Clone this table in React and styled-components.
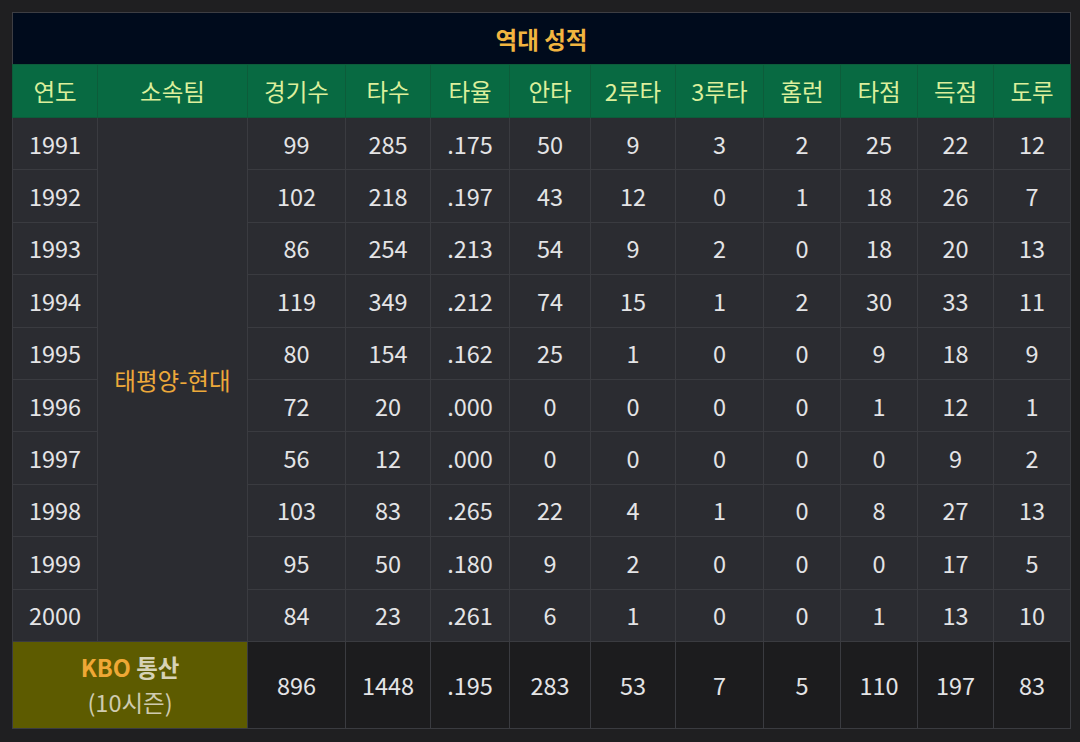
import styled, { createGlobalStyle } from "styled-components";

const GlobalStyle = createGlobalStyle`
  html, body {
    margin: 0;
    padding: 0;
    background: #1f1f21;
  }
  body {
    font-family: "Noto Sans CJK KR", "Noto Sans", sans-serif;
  }
`;

const Page = styled.div`
  padding: 12px 10px 12px 12px;
`;

const Table = styled.table`
  width: 1058px;
  border-collapse: collapse;
  table-layout: fixed;
  border: 1px solid #3d3e43;
  font-size: 23.5px;
`;

const TitleCell = styled.th`
  height: 51px;
  padding: 0;
  background: #000b1c;
  color: #f2b540;
  font-size: 23.5px;
  font-weight: 700;
  text-align: center;
`;

const HeadCell = styled.th`
  height: 52px;
  padding: 0;
  background: #086a42;
  color: #dcef9c;
  font-weight: 400;
  text-align: center;
  border: 1px solid #0d5c3a;
`;

const Cell = styled.td`
  height: 51.4px;
  padding: 0;
  background: ${(p) => (p.$total ? "#1c1c1e" : "#2b2c31")};
  color: #e4e4e6;
  text-align: center;
  border: 1px solid #3a3b40;
`;

const TeamCell = styled(Cell)`
  color: #eda93a;
  padding-top: 2px;
`;

const SumLabel = styled.td`
  height: 86px;
  padding: 0;
  background: #5d5b00;
  text-align: center;
  border: 1px solid #3a3b40;
  line-height: 35px;
`;

const Kbo = styled.span`
  color: #efa835;
  font-weight: 700;
`;

const Tong = styled.span`
  color: #d6d2b6;
  font-weight: 700;
`;

const Season = styled.div`
  color: #cfcbb0;
`;

const widths = [85, 150, 98, 85, 79, 81, 85, 88, 77, 77, 76, 77];
const heads = ["연도", "소속팀", "경기수", "타수", "타율", "안타", "2루타", "3루타", "홈런", "타점", "득점", "도루"];

const rows = [
  ["1991", "99", "285", ".175", "50", "9", "3", "2", "25", "22", "12"],
  ["1992", "102", "218", ".197", "43", "12", "0", "1", "18", "26", "7"],
  ["1993", "86", "254", ".213", "54", "9", "2", "0", "18", "20", "13"],
  ["1994", "119", "349", ".212", "74", "15", "1", "2", "30", "33", "11"],
  ["1995", "80", "154", ".162", "25", "1", "0", "0", "9", "18", "9"],
  ["1996", "72", "20", ".000", "0", "0", "0", "0", "1", "12", "1"],
  ["1997", "56", "12", ".000", "0", "0", "0", "0", "0", "9", "2"],
  ["1998", "103", "83", ".265", "22", "4", "1", "0", "8", "27", "13"],
  ["1999", "95", "50", ".180", "9", "2", "0", "0", "0", "17", "5"],
  ["2000", "84", "23", ".261", "6", "1", "0", "0", "1", "13", "10"],
];

const totals = ["896", "1448", ".195", "283", "53", "7", "5", "110", "197", "83"];

export default function App() {
  return (
    <>
      <GlobalStyle />
      <Page>
        <Table>
          <colgroup>
            {widths.map((w, i) => (
              <col key={i} style={{ width: w }} />
            ))}
          </colgroup>
          <thead>
            <tr>
              <TitleCell colSpan={12}>역대 성적</TitleCell>
            </tr>
            <tr>
              {heads.map((h) => (
                <HeadCell key={h}>{h}</HeadCell>
              ))}
            </tr>
          </thead>
          <tbody>
            {rows.map((r, i) => (
              <tr key={r[0]}>
                <Cell>{r[0]}</Cell>
                {i === 0 && <TeamCell rowSpan={10}>태평양-현대</TeamCell>}
                {r.slice(1).map((v, j) => (
                  <Cell key={j}>{v}</Cell>
                ))}
              </tr>
            ))}
            <tr>
              <SumLabel colSpan={2}>
                <div>
                  <Kbo>KBO</Kbo> <Tong>통산</Tong>
                </div>
                <Season>(10시즌)</Season>
              </SumLabel>
              {totals.map((v, j) => (
                <Cell key={j} $total>
                  {v}
                </Cell>
              ))}
            </tr>
          </tbody>
        </Table>
      </Page>
    </>
  );
}
